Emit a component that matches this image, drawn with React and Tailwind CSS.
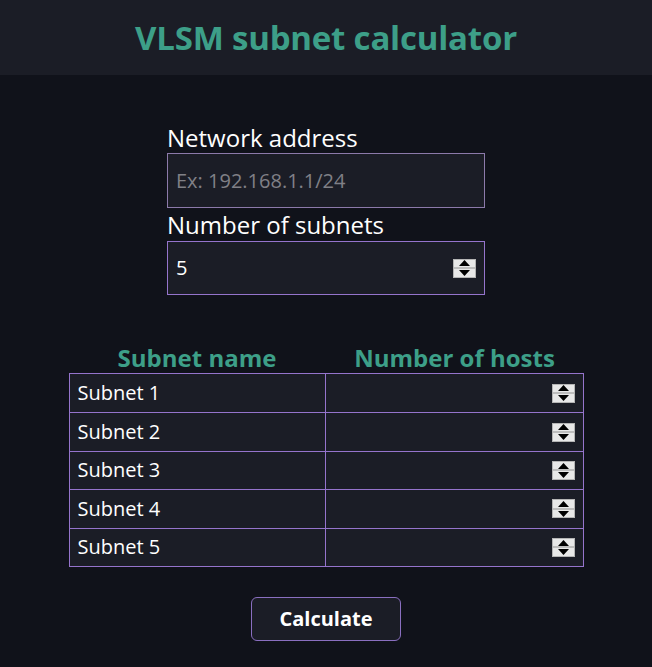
import React from 'react';

const Spinner = () => (
    <div className="w-[23px] h-[19px] flex flex-col bg-[#e8e8e8] border border-[#b5b5b5]">
        <div className="flex-1 flex items-center justify-center border-b-2 border-[#bdbdbd]">
            <svg width="11" height="6" viewBox="0 0 11 6"><polygon points="5.5,0 11,6 0,6" fill="#000" /></svg>
        </div>
        <div className="flex-1 flex items-center justify-center">
            <svg width="11" height="6" viewBox="0 0 11 6"><polygon points="0,0 11,0 5.5,6" fill="#000" /></svg>
        </div>
    </div>
);

const App = () => {
    const subnets = ['Subnet 1', 'Subnet 2', 'Subnet 3', 'Subnet 4', 'Subnet 5'];

    return (
        <div className="min-h-[667px] bg-[#10121a] text-white" style={{ fontFamily: '"Open Sans", "Noto Sans", sans-serif' }}>
            <header className="h-[75px] bg-[#1b1d26] flex items-center justify-center">
                <h1 className="text-[33px] font-bold text-[#3d9f88] tracking-[-0.2px]">VLSM subnet calculator</h1>
            </header>

            <div className="w-[318px] mx-auto pt-[48px]">
                <label className="block text-[24px] leading-[29px]">Network address</label>
                <div className="h-[55px] mt-[1px] bg-[#1b1d26] border border-[#8c7aaa] flex items-center px-[8px]">
                    <span className="text-[20px] text-[#808086]">Ex: 192.168.1.1/24</span>
                </div>
                <label className="block text-[24px] leading-[30px] mt-[2px]">Number of subnets</label>
                <div className="h-[54px] mt-[1px] bg-[#1b1d26] border border-[#9574cc] flex items-center justify-between pl-[8px] pr-[8px]">
                    <span className="text-[20px]">5</span>
                    <Spinner />
                </div>
            </div>

            <div className="w-[515px] mx-auto mt-[47px]">
                <div className="flex text-[24px] font-bold text-[#3d9f88] leading-[31px]">
                    <div className="w-[257px] text-center">Subnet name</div>
                    <div className="flex-1 text-center">Number of hosts</div>
                </div>
                <div className="border border-[#9574cc] bg-[#1b1d26]">
                    {subnets.map((name, index) => (
                        <div key={index} className={`flex h-[38.4px] ${index > 0 ? 'border-t border-[#9574cc]' : ''}`}>
                            <div className="w-[256px] flex items-center px-[8px] border-r border-[#9574cc] text-[20px]">{name}</div>
                            <div className="flex-1 flex items-center justify-end pr-[8px]">
                                <Spinner />
                            </div>
                        </div>
                    ))}
                </div>
            </div>

            <div className="flex justify-center mt-[30px]">
                <button className="w-[150px] h-[44px] rounded-[6px] bg-[#1b1d26] border border-[#8a6fc0] text-[20px] font-bold text-white">
                    Calculate
                </button>
            </div>
        </div>
    );
};

export default App;
